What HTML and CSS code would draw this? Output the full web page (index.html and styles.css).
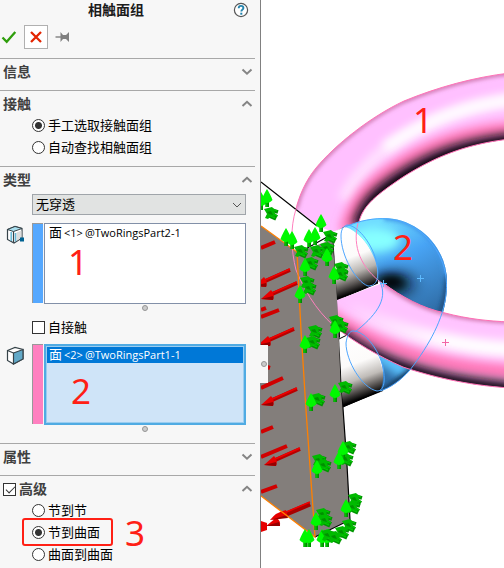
FILE: index.html
```html
<!DOCTYPE html>
<html lang="zh-CN">
<head>
<meta charset="utf-8">
<title>相触面组</title>
<link rel="stylesheet" href="styles.css">
</head>
<body>
<main class="app">
  <form class="panel">
    <header class="title">
      <h1>相触面组</h1>
      <button type="button" class="icon-btn help" aria-label="帮助">
        <svg width="16" height="16" viewBox="0 0 16 16"><circle cx="8" cy="8" r="6.6" fill="#fff" stroke="#555" stroke-width="1.2"/><path d="M5.700 6.300C5.700 4.500 6.800 3.900 8 3.900c1.400 0 2.400.8 2.400 2 0 1.700-2.100 1.800-2.100 3.700" fill="none" stroke="#2383ad" stroke-width="1.900"/><rect x="7.300" y="10.700" width="2" height="2" fill="#2383ad"/></svg>
      </button>
    </header>
    <div class="toolbar">
      <button type="button" class="icon-btn" aria-label="确定"><svg width="18" height="18" viewBox="0 0 18 18"><path d="M2.500 9.500l4.200 4.200L15.300 4" fill="none" stroke="#2f9e0c" stroke-width="2.300"/></svg></button>
      <button type="button" class="icon-btn cancel" aria-label="取消"><svg width="22" height="22" viewBox="0 0 22 22"><path d="M6 6l10 10M16 6L6 16" stroke="#e32400" stroke-width="2.300"/></svg></button>
      <button type="button" class="icon-btn" aria-label="保持可见"><svg width="18" height="18" viewBox="0 0 18 18"><path d="M1.500 9H8" stroke="#808080" stroke-width="1.400"/><path d="M6.500 4L9 7h3l3-3v10l-3-3H9l-2.500 3z" fill="#808080"/></svg></button>
    </div>

    <section class="section">
      <h2><span>信息</span><svg class="chev" viewBox="0 0 12 8"><path d="M1.500 1.500L6 5.700l4.500-4.200"/></svg></h2>
    </section>
    <section class="section">
      <h2><span>接触</span><svg class="chev" viewBox="0 0 12 8"><path d="M1.500 6L6 1.800 10.500 6"/></svg></h2>
      <label class="choice"><input type="radio" name="pick" checked>手工选取接触面组</label>
      <label class="choice"><input type="radio" name="pick">自动查找相触面组</label>
    </section>
    <section class="section">
      <h2><span>类型</span><svg class="chev" viewBox="0 0 12 8"><path d="M1.500 6L6 1.800 10.500 6"/></svg></h2>
      <div class="combo">
        <select aria-label="类型"><option>无穿透</option></select>
        <svg viewBox="0 0 12 8"><path d="M2 2l4 4 4-4"/></svg>
      </div>
      <div class="pick">
        <svg class="cube" viewBox="0 0 20 20"><path d="M1.500 4.500L9 1.500l7 2V13l-8 5-6.500-3.500z" fill="#fff" stroke="#37444a" stroke-width="1.200"/><path d="M1.500 4.500L9 1.500l7 2-8.500 3z" fill="#a9dfef" stroke="#37444a"/><path d="M10.500 7.500l5-2v7l-5 3.500z" fill="#ddd"/><path d="M5.200 7v9M9.500 8v8.500" stroke="#65b9d7" stroke-width="1.500"/><path d="M7.500 6.500v11" stroke="#37444a" stroke-width="1.200"/><rect x="14" y="12.500" width="4" height="4" fill="#006292"/></svg>
        <span class="swatch blue"></span>
        <ul class="list" role="listbox" aria-label="组 1"><li>面<span class="ref"><b>&lt;1&gt;</b>@TwoRingsPart2-1</span></li></ul>
        <span class="mark mark-one">1</span>
        <i class="grip"></i>
      </div>
      <label class="choice self"><input type="checkbox">自接触</label>
      <div class="pick">
        <svg class="cube" viewBox="0 0 20 20"><path d="M1.500 4.500L9 1.500l8 2V13l-9.500 5-6-3.500z" fill="#fff" stroke="#37444a" stroke-width="1.200"/><path d="M7.500 7L17 3.500V13l-9.500 5z" fill="#62a9c8" stroke="#37444a" stroke-width="1.200"/><path d="M1.500 4.500l6 2.500" stroke="#37444a" stroke-width="1.200"/></svg>
        <span class="swatch pink"></span>
        <ul class="list active" role="listbox" aria-label="组 2"><li>面<span class="ref"><b>&lt;2&gt;</b>@TwoRingsPart1-1</span></li></ul>
        <span class="mark mark-two">2</span>
        <i class="grip"></i>
      </div>
    </section>
    <section class="section">
      <h2><span>属性</span><svg class="chev" viewBox="0 0 12 8"><path d="M1.500 1.500L6 5.700l4.500-4.200"/></svg></h2>
    </section>
    <section class="section">
      <h2><label><input type="checkbox" checked>高级</label><svg class="chev" viewBox="0 0 12 8"><path d="M1.500 6L6 1.800 10.500 6"/></svg></h2>
      <label class="choice"><input type="radio" name="mode">节到节</label>
      <label class="choice framed"><input type="radio" name="mode" checked>节到曲面<span class="mark mark-three">3</span></label>
      <label class="choice"><input type="radio" name="mode">曲面到曲面</label>
    </section>
    <div class="splitter"><i class="grip"></i></div>
  </form>

  <div class="viewport">
    <svg viewBox="261 0 243 568" role="img" aria-label="双环模型">
      <defs>
        <clipPath id="armTop"><path d="M510 73C475 77 438 87 404 101C370 117 335 145 316 168C306 180 299 196 296 209L320 227L333 232L345 227L359 222C363 205 378 194 400 179C432 158 465 144 510 139Z"/></clipPath>
        <clipPath id="armLow"><path d="M337 300L383 283C402 297 422 308 445 313C468 319 488 321 510 322V388C465 385 430 376 403 367C378 356 355 342 339 330Z"/></clipPath>
        <clipPath id="elbow"><path d="M345 227C360 220 374 218 383 218C418 218 447 247 447 282C447 316 434 341 410 370C400 381 390 388 380 391C386 379 383 360 375 345C400 333 383 312 383 283L378 281C380 260 364 232 345 227Z"/></clipPath>
        <filter id="b2" filterUnits="userSpaceOnUse" x="240" y="0" width="320" height="568"><feGaussianBlur stdDeviation="2"/></filter>
        <filter id="b5" filterUnits="userSpaceOnUse" x="240" y="0" width="320" height="568"><feGaussianBlur stdDeviation="5"/></filter>
        <filter id="b8" filterUnits="userSpaceOnUse" x="240" y="0" width="320" height="568"><feGaussianBlur stdDeviation="8"/></filter>
        <linearGradient id="steel1" gradientUnits="userSpaceOnUse" x1="344" y1="230" x2="366" y2="288"><stop offset="0" stop-color="#fff"/><stop offset=".45" stop-color="#fcfbfa"/><stop offset=".7" stop-color="#b8b4b0"/><stop offset=".87" stop-color="#55514f"/><stop offset="1" stop-color="#000"/></linearGradient>
        <linearGradient id="steel2" gradientUnits="userSpaceOnUse" x1="346" y1="336" x2="368" y2="396"><stop offset="0" stop-color="#fff"/><stop offset=".45" stop-color="#fcfbfa"/><stop offset=".7" stop-color="#c0bcb8"/><stop offset=".87" stop-color="#55514f"/><stop offset="1" stop-color="#000"/></linearGradient>
        <linearGradient id="blue" gradientUnits="userSpaceOnUse" x1="375" y1="225" x2="425" y2="315"><stop offset="0" stop-color="#70dcff"/><stop offset=".4" stop-color="#48a4f5"/><stop offset="1" stop-color="#306ea8"/></linearGradient>
        <linearGradient id="grow" gradientUnits="userSpaceOnUse" x1="350" y1="0" x2="450" y2="0"><stop offset="0" stop-color="#fff" stop-opacity=".1"/><stop offset="1" stop-color="#fff"/></linearGradient>
        <g id="up">
          <path d="M-1.500 11h3.500v7h-3.500z" fill="#008c00"/><path d="M-1.500 11h2v7h-2z" fill="#00c000"/>
          <path d="M0 0C2 3 4 7 5.500 11C2 15-2 15-5.500 11C-4 7-2 3 0 0Z" fill="#00f800"/>
        </g>
        <g id="side">
          <path d="M6 4l7 5M3 7l9 4M8 2l6 2" stroke="#009400" stroke-width="3.500"/>
          <path d="M6 3l7 5M4 7l7 3M8 1l5 2" stroke="#00d000" stroke-width="1.200"/>
          <path d="M0 1L8-1l3 3-1 3 1 4-4-1-3 3-3-1 2-4z" fill="#00ba00"/>
          <path d="M3 4l4-1 2 4-4-1z" fill="#009000"/>
        </g>
        <g id="load"><path d="M9-4L36-16" stroke="#b80000" stroke-width="4"/><path d="M9-5L36-17" stroke="#f00000" stroke-width="1.500"/><path d="M0 0L10-9Q14-5 12 1Z" fill="#e80000"/><path d="M0 0l12 1q1-2 0-4z" fill="#950000"/></g>
      </defs>

      <!-- upper arm of the pink ring -->
      <g clip-path="url(#armTop)">
        <path d="M261 50h260v200H261z" fill="#ffc0ff"/>
        <path d="M515 100C460 104 410 130 380 154C360 172 350 185 344 200" fill="none" stroke="#fff" stroke-opacity=".55" stroke-width="12" filter="url(#b5)"/>
        <path d="M530 98C470 103 425 120 385 148" fill="none" stroke="#fff" stroke-width="11" filter="url(#b5)"/>
        <path d="M515 129C456 132 416 153 388 173C367 188 353 204 346 232" fill="none" stroke="#ff74b4" stroke-width="14" filter="url(#b5)"/>
        <path d="M525 141C465 146 432 160 400 181C378 196 367 206 361 228" fill="none" stroke="#100208" stroke-width="19" filter="url(#b5)"/>
        <path d="M510 73C475 77 438 87 404 101C370 117 335 145 316 168C306 180 299 196 296 209" fill="none" stroke="#b95a8c" stroke-width="3" filter="url(#b2)"/>
      </g>
      <path d="M510 73C475 77 438 87 404 101C370 117 335 145 316 168C306 180 299 196 296 209M359 222C363 205 378 194 400 179C432 158 465 144 510 139" fill="none" stroke="#ff75b8"/>

      <!-- block -->
      <path d="M261 226L297 252L302 251L333 239L338 300L341 380L347 465L350 520L315 537L261 496Z" fill="#837e7b"/>
      <path d="M261 182L317 226M302 251L345 227M333 239L338 300L341 380L347 465L350 520L315 537" fill="none" stroke="#000" stroke-width="1.200"/>

      <!-- steel pins -->
      <path d="M333 232L347 226C363 229 379 252 378 283L337 300Z" fill="url(#steel1)"/>
      <path d="M339 338L350 332C370 333 388 365 383 391L343 407Z" fill="url(#steel2)"/>
      <path d="M337 300L378 283M343 407L380 391M339 339l8-4" stroke="#000"/>

      <!-- blue elbow -->
      <g clip-path="url(#elbow)">
        <path d="M330 200h130v200H330z" fill="url(#blue)"/>
        <ellipse cx="376" cy="240" rx="24" ry="12" fill="#86ffff" filter="url(#b5)"/>
        <path d="M384 218C418 218 447 247 447 282" fill="none" stroke="#3f96e8" stroke-width="5" filter="url(#b2)"/>
        <path d="M447 275C447 295 442 310 437 320" fill="none" stroke="#1d4a78" stroke-width="4" filter="url(#b2)"/>
        <ellipse cx="392" cy="284" rx="22" ry="10" fill="#000814" filter="url(#b8)"/>
        <ellipse cx="391" cy="282" rx="13" ry="6" fill="#000" filter="url(#b5)"/>
        <path d="M374 350L406 372" stroke="#5cc4ff" stroke-width="16" filter="url(#b5)"/>
        <path d="M380 393L414 370" stroke="#173d62" stroke-width="6" filter="url(#b2)"/>
      </g>

      <!-- lower arm of the pink ring -->
      <g clip-path="url(#armLow)">
        <path d="M330 270h190v130H330z" fill="#ffc4ff"/>
        <path d="M350 310C400 333 455 348 525 350" fill="none" stroke="url(#grow)" stroke-width="16" filter="url(#b5)"/>
        <path d="M320 309C365 342 425 368 525 373" fill="none" stroke="#ff74b6" stroke-width="14" filter="url(#b5)"/>
        <path d="M339 334C378 363 430 383 525 390" fill="none" stroke="#100208" stroke-width="14" filter="url(#b5)"/>
        <path d="M383 283C402 297 422 308 445 313C468 319 488 321 515 322" fill="none" stroke="#c05a90" stroke-width="3" filter="url(#b2)"/>
      </g>
      <path d="M383 283C402 297 422 308 445 313C468 319 488 321 510 322M510 388C465 385 430 376 403 367C378 356 355 342 339 330" fill="none" stroke="#ff70b5"/>
      <path d="M296 209C290 228 291 250 296 270C307 297 322 317 340 331M358 223C352 247 361 268 383 284" fill="none" stroke="#ff80be"/>
      <path d="M345 227C374 214 403 216 424 235C460 270 451 317 410 370C400 381 390 388 380 391M347 225C357 225 371 242 376 260C380 278 377 286 368 286C355 281 341 255 341 236C341 230 343 226 347 225ZM380 282C389 300 374 317 355 332M352 331C364 330 378 348 383 367C386 384 383 391 377 391C362 388 346 361 346 343C347 337 348 333 352 331Z" fill="none" stroke="#4ea6ff"/>
      <path d="M417 278.500h7M420.500 275v7M380 283.500h7M383.500 280v7" stroke="#5dbaff"/>
      <path d="M442 342.500h7M445.500 339v7" stroke="#f266a6"/>

      <!-- pressure arrows -->
      <path d="M261 248l14-6M261 310l5-2M261 317l18-7M261 388l22-10M261 432l12-5M261 457l26-11M261 492l16-6M267 367l3 1" fill="none" stroke="#d00000" stroke-width="4"/>
      <use href="#load" x="254" y="286"/><use href="#load" x="261" y="299"/><use href="#load" x="258" y="345"/><use href="#load" x="261" y="405"/><use href="#load" x="264" y="465"/>
      <path d="M284 515l26-11" stroke="#a80000" stroke-width="5"/><path d="M284 513l26-11" stroke="#f00000" stroke-width="1.500"/>
      <path d="M270 520q6-8 16-10l2 7zM266 526l10-8q5 2 4 8zM261 521l6 2v7l-6 2z" fill="#e60000"/>
      <path d="M270 520l18-2-1-3zM266 526h14l-1-4z" fill="#960000"/>

      <path d="M261 226L297 252L301 330L306 410L315 537L261 496" fill="none" stroke="#ff8000" stroke-width="1.300"/>

      <!-- fixture symbols -->
      <use href="#side" x="264" y="208"/><use href="#up" x="261" y="192"/><use href="#up" x="267" y="189"/>
      <use href="#side" x="323" y="231"/><use href="#side" x="310" y="246"/><use href="#side" x="320" y="243"/><use href="#side" x="294" y="246"/>
      <use href="#up" x="321" y="214"/><use href="#up" x="309" y="229"/><use href="#up" x="315" y="227"/><use href="#up" x="292" y="231"/><use href="#up" x="286" y="228"/><use href="#up" x="327" y="248"/>
      <use href="#side" x="304" y="258"/><use href="#up" x="305" y="258"/>
      <use href="#side" x="300" y="277"/><use href="#side" x="302" y="283"/><use href="#up" x="300" y="285"/>
      <use href="#side" x="334" y="263"/><use href="#side" x="334" y="269"/><use href="#up" x="334" y="266"/>
      <use href="#side" x="329" y="316"/><use href="#side" x="334" y="321"/><use href="#up" x="335" y="320"/>
      <use href="#side" x="308" y="326"/><use href="#side" x="306" y="337"/><use href="#up" x="305" y="335"/>
      <use href="#side" x="338" y="382"/><use href="#up" x="335" y="384"/>
      <use href="#side" x="311" y="394"/><use href="#up" x="311" y="393"/>
      <use href="#side" x="342" y="442"/><use href="#side" x="339" y="454"/><use href="#up" x="343" y="441"/><use href="#up" x="339" y="451"/>
      <use href="#side" x="312" y="455"/><use href="#side" x="317" y="460"/><use href="#up" x="317" y="460"/>
      <use href="#side" x="348" y="494"/><use href="#side" x="346" y="502"/><use href="#up" x="346" y="499"/>
      <use href="#side" x="316" y="509"/><use href="#side" x="318" y="515"/><use href="#up" x="316" y="512"/>
      <use href="#up" x="305" y="529"/><use href="#up" x="309" y="529"/><use href="#up" x="322" y="529"/><use href="#up" x="327" y="529"/>
      <use href="#side" x="321" y="530"/><use href="#side" x="328" y="532"/><use href="#side" x="335" y="527"/><use href="#side" x="342" y="520"/>

      <text x="413" y="133">1</text>
      <text x="393" y="260">2</text>
    </svg>
  </div>
</main>
</body>
</html>
```
FILE: styles.css
```css
* { box-sizing: border-box; }

body {
  margin: 0;
  background: #fff;
  color: #000;
  font: 13px/22px "Noto Sans", "Noto Sans CJK SC", sans-serif;
}

.app {
  display: flex;
  min-height: 100vh;
}

.panel {
  position: relative;
  flex: 0 0 261px;
  padding-right: 5px;
  background: #f7f7f7;
  border-right: 1px solid #808080;
}

.title {
  position: relative;
  height: 22px;
}

h1 {
  margin: 0;
  padding-left: 88px;
  color: #1c1c1c;
  font-size: 14px;
  line-height: 20px;
}

.icon-btn {
  display: flex;
  align-items: center;
  justify-content: center;
  width: 18px;
  height: 24px;
  padding: 0;
  border: 0;
  background: none;
}

.help {
  position: absolute;
  top: 0;
  right: 5px;
  height: 20px;
}

.toolbar {
  display: flex;
  gap: 6px;
  height: 36px;
  padding-top: 3px;
}

.cancel {
  width: 24px;
  background: #fff;
  border: 1px solid #b0b0b0;
}

.section {
  padding-bottom: 8px;
  border-top: 1px solid #a8a8a8;
}

.section:last-of-type { padding-bottom: 0; }

h2 {
  display: flex;
  align-items: center;
  justify-content: space-between;
  height: 23px;
  margin: 0;
  padding: 3px 2px 0 3px;
  color: #404040;
  font-size: 14px;
  line-height: 20px;
}

h2 label {
  display: flex;
  align-items: center;
  gap: 3px;
}

.chev {
  width: 12px;
  height: 8px;
  fill: none;
  stroke: #858585;
  stroke-width: 2;
}

input {
  flex: none;
  width: 13px;
  height: 13px;
  margin: 0;
  appearance: none;
  background: #fff;
  border: 1px solid #333;
}

input[type="radio"] { border-radius: 50%; }

input[type="radio"]:checked { background: radial-gradient(circle, #333 3px, #fff 4px); }

h2 input:checked {
  position: relative;
}

h2 input:checked::after {
  content: "";
  position: absolute;
  top: 2px;
  left: 2px;
  width: 8px;
  height: 4px;
  border: solid #333;
  border-width: 0 0 1px 1px;
  transform: rotate(-45deg);
}

.choice {
  position: relative;
  display: flex;
  align-items: center;
  gap: 3px;
  width: fit-content;
  height: 22px;
  margin-left: 32px;
}

.self {
  height: 26px;
  margin-bottom: 4px;
}

.framed::before {
  content: "";
  position: absolute;
  inset: -3px -13px -3px -10px;
  border: 2px solid #ff2015;
  border-radius: 3px;
}

.combo {
  position: relative;
  margin: 4px 9px 8px 32px;
}

.combo select {
  display: block;
  width: 100%;
  height: 21px;
  padding: 0 3px;
  appearance: none;
  background: #e1e3e2;
  border: 1px solid #a0a5aa;
  border-radius: 0;
  color: #000;
  font: inherit;
  line-height: 19px;
}

.combo svg {
  position: absolute;
  top: 7px;
  right: 3px;
  width: 12px;
  height: 8px;
  fill: none;
  stroke: #555;
  pointer-events: none;
}

.pick {
  position: relative;
  display: grid;
  grid-template-columns: 26px 11px 1fr;
  grid-template-rows: 81px 10px;
  margin: 0 9px 0 6px;
}

.cube {
  width: 20px;
  height: 20px;
  margin-top: 2px;
}

.swatch {
  height: 80px;
  border: solid #999;
  border-width: 1px 0 0 1px;
}

.blue { background: #55a8ff; }
.pink { background: #ff80c0; }

.list {
  margin: 0 0 0 1px;
  padding: 1px 2px;
  background: #fff;
  border: 1px solid #8290a8;
  list-style: none;
  line-height: 15px;
}

.list li {
  height: 16px;
  padding-left: 2px;
  white-space: nowrap;
}

.ref {
  font-family: "Open Sans", sans-serif;
  font-size: 11px;
}

.ref b {
  padding: 0 2px;
  font-weight: 400;
}

.active {
  padding: 0;
  background: #cfe4f8;
  border: 2px solid #50abe3;
  box-shadow: inset 0 0 0 1px #9acdf0;
}

.active li {
  margin: 1px;
  background: #0078d7;
  color: #fff;
}

.grip {
  width: 6px;
  height: 6px;
  background: #ccc;
  border: 1px solid #959595;
  border-radius: 50%;
}

.pick .grip {
  grid-column: 3;
  justify-self: center;
  margin-top: 1px;
}

.mark,
.viewport text {
  color: #ff2015;
  fill: #ff2015;
  font: 35px/26px "Noto Sans", sans-serif;
}

.mark { position: absolute; }
.mark-one { top: 26px; left: 62px; }
.mark-two { top: 34px; left: 65px; }
.mark-three { top: -1px; left: 93px; }

.splitter {
  position: absolute;
  top: 345px;
  right: -8px;
  display: flex;
  align-items: center;
  justify-content: center;
  width: 8px;
  height: 38px;
  background: #f7f7f7;
}

.viewport {
  flex: 1;
  min-width: 0;
  background: #fff;
}

.viewport svg {
  display: block;
  width: 100%;
  height: auto;
}
```
